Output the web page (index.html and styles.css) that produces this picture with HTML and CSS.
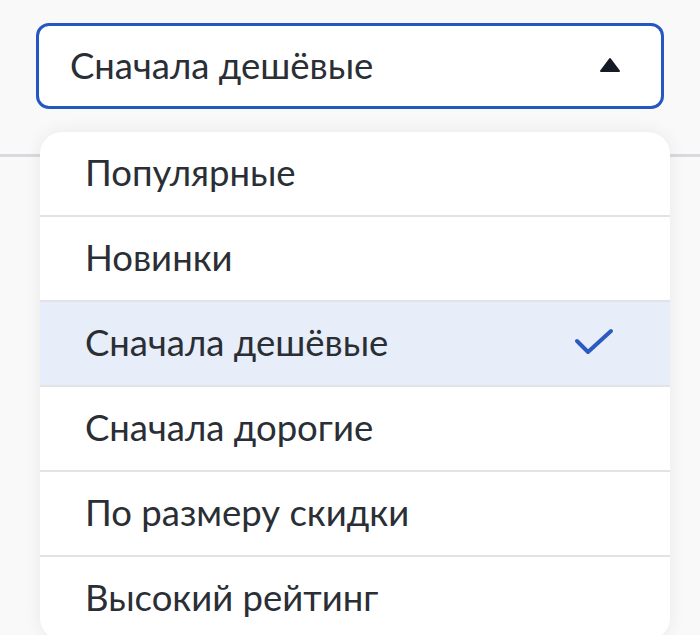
FILE: index.html
```html
<!DOCTYPE html>
<html lang="ru">
<head>
<meta charset="utf-8">
<link rel="stylesheet" href="styles.css">
</head>
<body>
<div class="page">
  <div class="sort">
    <button class="select">
      <span class="select-label">Сначала дешёвые</span>
      <svg class="caret" width="22" height="16" viewBox="0 0 22 16"><path d="M11 2 L20 14 L2 14 Z" fill="#151a26" stroke="#151a26" stroke-width="2" stroke-linejoin="round"/></svg>
    </button>
    <div class="rule"></div>
    <ul class="menu">
      <li class="item">Популярные</li>
      <li class="item">Новинки</li>
      <li class="item active">Сначала дешёвые
        <svg class="check" width="40" height="30" viewBox="0 0 40 30"><path d="M3 14 L14 25 L37 4" fill="none" stroke="#2b5bc1" stroke-width="4" stroke-linecap="round" stroke-linejoin="round"/></svg>
      </li>
      <li class="item">Сначала дорогие</li>
      <li class="item">По размеру скидки</li>
      <li class="item">Высокий рейтинг</li>
    </ul>
  </div>
</div>
</body>
</html>
```

FILE: styles.css
```css
* { box-sizing: border-box; }
html, body {
  margin: 0;
  padding: 0;
  background: #f9f9fa;
  font-family: "Lato", "Noto Sans", sans-serif;
  color: #2a2e35;
  overflow: hidden;
}
.page {
  width: 700px;
  height: 635px;
  padding-top: 23px;
}
.sort {
  position: relative;
}
.select {
  margin-left: 36px;
  width: 628px;
  height: 86px;
  display: flex;
  align-items: center;
  justify-content: space-between;
  padding: 0 40px 0 31px;
  background: #ffffff;
  border: 3px solid #2457c4;
  border-radius: 13px;
  font-family: inherit;
  font-size: 36.5px;
  color: #2a2e35;
}
.select-label { display: block; margin-top: -2px; }
.caret { display: block; margin-top: -2px; }
.rule {
  margin-top: 45px;
  height: 3px;
  background: #d9dadd;
}
.menu {
  position: absolute;
  left: 40px;
  top: 109px;
  width: 630px;
  margin: 0;
  padding: 0;
  list-style: none;
  background: #ffffff;
  border-radius: 22px;
  box-shadow: 0 0 18px rgba(0, 0, 0, 0.07);
  overflow: hidden;
}
.item {
  height: 85px;
  display: flex;
  align-items: center;
  justify-content: space-between;
  padding: 0 54px 3px 45px;
  font-size: 36.5px;
  color: #2a2e35;
  border-top: 2px solid #e1e3e7;
}
.item:first-child { border-top: none; height: 83px; }
.active { background: #e7eef9; }
.check { display: block; margin-right: 2px; }
```
